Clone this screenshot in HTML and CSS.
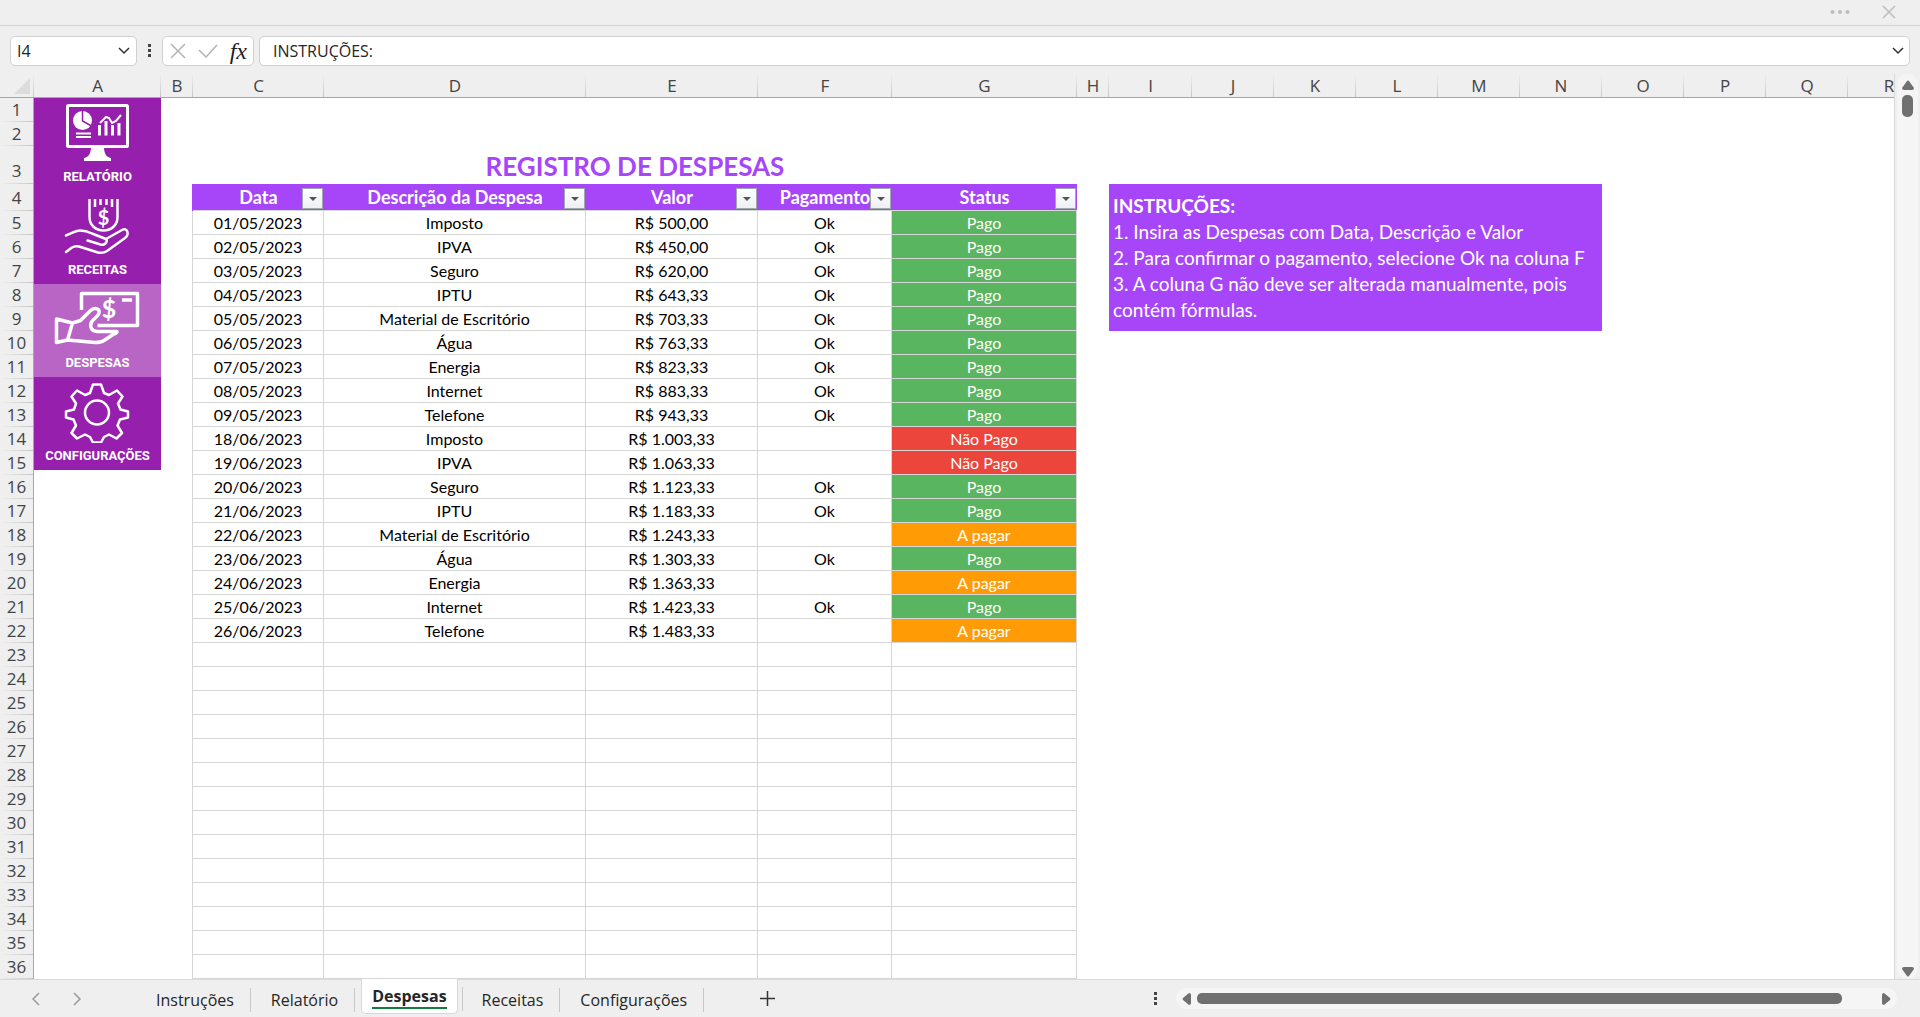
FILE: index.html
```html
<!DOCTYPE html>
<html lang="pt-BR">
<head>
<meta charset="utf-8">
<title>Registro de Despesas</title>
<link rel="stylesheet" href="styles.css">
</head>
<body>
<header class="topbar">
  <button class="icon-btn" aria-label="Mais opções"><svg width="20" height="6" viewBox="0 0 20 6" fill="#bdbdbd"><circle cx="2.500" cy="3" r="2"/><circle cx="10" cy="3" r="2"/><circle cx="17.500" cy="3" r="2"/></svg></button>
  <button class="icon-btn" aria-label="Fechar"><svg width="14" height="14" viewBox="0 0 14 14" stroke="#bdbdbd" stroke-width="1.500"><path d="M1 1l12 12M13 1L1 13"/></svg></button>
</header>

<div class="formula-row">
  <div class="name-box">
    <input class="name-input" type="text" value="I4" aria-label="Caixa de nome">
    <button class="icon-btn" aria-label="Abrir lista de nomes"><svg width="12" height="8" viewBox="0 0 12 8" fill="none" stroke="#333" stroke-width="1.500"><path d="M1 1l5 5 5-5"/></svg></button>
  </div>
  <svg class="grip" width="4" height="14" viewBox="0 0 4 14" fill="#444"><path d="M0 0h3v3H0zM0 5h3v3H0zM0 10h3v3H0z"/></svg>
  <div class="fx-box">
    <button class="icon-btn" aria-label="Cancelar"><svg width="16" height="16" viewBox="0 0 16 16" stroke="#b3b3b3" stroke-width="1.500"><path d="M1 1l14 14M15 1L1 15"/></svg></button>
    <button class="icon-btn" aria-label="Inserir"><svg width="20" height="14" viewBox="0 0 20 14" fill="none" stroke="#b3b3b3" stroke-width="1.500"><path d="M1 6l7 7L19 1"/></svg></button>
    <button class="icon-btn fx" aria-label="Inserir função">fx</button>
  </div>
  <div class="formula-box">
    <input class="formula-input" type="text" value="INSTRUÇÕES:" aria-label="Barra de fórmulas">
    <button class="icon-btn" aria-label="Expandir barra de fórmulas"><svg width="12" height="8" viewBox="0 0 12 8" fill="none" stroke="#333" stroke-width="1.500"><path d="M1 1l5 5 5-5"/></svg></button>
  </div>
</div>

<main class="workspace">
<div class="sheet">
<table class="grid">
<colgroup><col class="c-head"><col class="c-a"><col class="c-b"><col class="c-c"><col class="c-d"><col class="c-e"><col class="c-f"><col class="c-g"><col class="c-h"><col class="c-i"><col class="c-std" span="9"></colgroup>
<thead>
<tr class="letters"><th class="corner"><svg width="16" height="16" viewBox="0 0 16 16" fill="#dcdcdc"><path d="M16 0v16H0z"/></svg></th><th>A</th><th>B</th><th>C</th><th>D</th><th>E</th><th>F</th><th>G</th><th>H</th><th>I</th><th>J</th><th>K</th><th>L</th><th>M</th><th>N</th><th>O</th><th>P</th><th>Q</th><th>R</th></tr>
</thead>
<tbody>
<tr><th scope="row">1</th>
<td class="nav-cell" rowspan="36">
<nav class="side-nav">
<a class="nav-item" href="#relatorio"><svg width="127" height="66" viewBox="0 0 127 66" fill="none" stroke="#fff" stroke-width="3"><rect x="33.500" y="7.500" width="60" height="41" rx="1"/><path fill="#fff" stroke="none" d="M57 49h13c0 6 2 10 7 11v3H50v-3c5-1 7-5 7-11z"/><circle cx="48.500" cy="22.500" r="9.500" fill="#fff" stroke="none"/><path stroke="#961fad" stroke-width="1.500" d="M48.500 12v11l9 5"/><path stroke-width="2" d="M42 35.500h15M42 39h15"/><path d="M65.500 37.500V27M72 37.500V23M78.500 37.500V27M85 37.500V25"/><path stroke-width="2" d="M66 25l6-6 3 1 3 5 4-2 5-6"/></svg><span>RELATÓRIO</span></a>
<a class="nav-item" href="#receitas"><svg width="127" height="66" viewBox="0 0 127 66" fill="none" stroke="#fff" stroke-width="2.500" stroke-linecap="round" stroke-linejoin="round"><path stroke-linecap="butt" d="M55.500 8v18c0 8 6 13.500 14 13.500S83.500 34 83.500 26V8M61 8v8M66.500 8v6M72.500 8v6M78 8v8"/><path d="M32 44.500c5-2 10-5 14-5s8 1 12 3l14 5.500 16-9c5-3 8 4 3 8L73 60c-3 2-6 2-9 1.500l-19-6c-3-.8-5-.3-7 1L32 61M53.500 49.500l13 4c4 1 7-2 6-5"/><text class="coin" x="69.500" y="34">$</text></svg><span>RECEITAS</span></a>
<a class="nav-item active" href="#despesas" aria-current="page"><svg width="127" height="66" viewBox="0 0 127 66" fill="none" stroke="#fff" stroke-width="3.500" stroke-linejoin="round"><path d="M47.500 26V9.500h56V41.500H63.500M88 16h10"/><path d="M22.500 35l16 4-5 17-11 2.500zM38.500 39l8-2.500L56 27c4-4 10-3 9 2-1 4-5 5-7.500 9-2 5 0 9.500 6 9.500h19.500c0 2-2 2-4 3l-9 6c-3 2-6 2-9 2L33.500 56"/><text class="coin big" x="75" y="34">$</text></svg><span>DESPESAS</span></a>
<a class="nav-item" href="#configuracoes"><svg width="127" height="66" viewBox="0 0 127 66" fill="none" stroke="#fff" stroke-width="2.500" stroke-linejoin="round"><path d="M59 7.500h8l3 8.500 5 2 8-4.500 5.500 6-4.500 7 2.500 6 7.500 2v6l-8 2-2.500 6 4.500 7.500-5.500 5.500-7.500-4-5 2.500-3 5.500h-8l-3-5.500-5-2.500-8 4-5.500-5.500 4.500-7.500-2.500-6-7.500-2v-6l8-2 2-6-4.500-7 5.500-6 8 4.500 5-2z"/><circle cx="63" cy="35.500" r="12"/></svg><span>CONFIGURAÇÕES</span></a>
</nav>
</td><td></td><td colspan="5"></td><td colspan="11"></td></tr>
<tr><th scope="row">2</th><td></td><td colspan="5"></td><td colspan="11"></td></tr>
<tr class="title-row"><th scope="row">3</th><td></td><td class="title" colspan="5">REGISTRO DE DESPESAS</td><td colspan="11"></td></tr>
<tr class="head-row"><th scope="row">4</th><td class="edge"></td>
<th class="field" scope="col">Data<button class="filter" aria-label="Filtrar Data"></button></th><th class="field" scope="col">Descrição da Despesa<button class="filter" aria-label="Filtrar Descrição da Despesa"></button></th><th class="field" scope="col">Valor<button class="filter" aria-label="Filtrar Valor"></button></th><th class="field" scope="col">Pagamento<button class="filter" aria-label="Filtrar Pagamento"></button></th><th class="field" scope="col">Status<button class="filter" aria-label="Filtrar Status"></button></th>
<td></td>
<td class="notes" colspan="6" rowspan="6"><strong>INSTRUÇÕES:</strong><br>1. Insira as Despesas com Data, Descrição e Valor<br>2. Para confirmar o pagamento, selecione Ok na coluna F<br>3. A coluna G não deve ser alterada manualmente, pois contém fórmulas.</td><td colspan="4"></td></tr>
<tr class="rec"><th scope="row">5</th><td></td><td>01/05/2023</td><td>Imposto</td><td>R$ 500,00</td><td>Ok</td><td class="paid">Pago</td><td></td><td colspan="4"></td></tr>
<tr class="rec"><th scope="row">6</th><td></td><td>02/05/2023</td><td>IPVA</td><td>R$ 450,00</td><td>Ok</td><td class="paid">Pago</td><td></td><td colspan="4"></td></tr>
<tr class="rec"><th scope="row">7</th><td></td><td>03/05/2023</td><td>Seguro</td><td>R$ 620,00</td><td>Ok</td><td class="paid">Pago</td><td></td><td colspan="4"></td></tr>
<tr class="rec"><th scope="row">8</th><td></td><td>04/05/2023</td><td>IPTU</td><td>R$ 643,33</td><td>Ok</td><td class="paid">Pago</td><td></td><td colspan="4"></td></tr>
<tr class="rec"><th scope="row">9</th><td></td><td>05/05/2023</td><td>Material de Escritório</td><td>R$ 703,33</td><td>Ok</td><td class="paid">Pago</td><td></td><td colspan="4"></td></tr>
<tr class="rec"><th scope="row">10</th><td></td><td>06/05/2023</td><td>Água</td><td>R$ 763,33</td><td>Ok</td><td class="paid">Pago</td><td colspan="11"></td></tr>
<tr class="rec"><th scope="row">11</th><td></td><td>07/05/2023</td><td>Energia</td><td>R$ 823,33</td><td>Ok</td><td class="paid">Pago</td><td colspan="11"></td></tr>
<tr class="rec"><th scope="row">12</th><td></td><td>08/05/2023</td><td>Internet</td><td>R$ 883,33</td><td>Ok</td><td class="paid">Pago</td><td colspan="11"></td></tr>
<tr class="rec"><th scope="row">13</th><td></td><td>09/05/2023</td><td>Telefone</td><td>R$ 943,33</td><td>Ok</td><td class="paid">Pago</td><td colspan="11"></td></tr>
<tr class="rec"><th scope="row">14</th><td></td><td>18/06/2023</td><td>Imposto</td><td>R$ 1.003,33</td><td></td><td class="unpaid">Não Pago</td><td colspan="11"></td></tr>
<tr class="rec"><th scope="row">15</th><td></td><td>19/06/2023</td><td>IPVA</td><td>R$ 1.063,33</td><td></td><td class="unpaid">Não Pago</td><td colspan="11"></td></tr>
<tr class="rec"><th scope="row">16</th><td></td><td>20/06/2023</td><td>Seguro</td><td>R$ 1.123,33</td><td>Ok</td><td class="paid">Pago</td><td colspan="11"></td></tr>
<tr class="rec"><th scope="row">17</th><td></td><td>21/06/2023</td><td>IPTU</td><td>R$ 1.183,33</td><td>Ok</td><td class="paid">Pago</td><td colspan="11"></td></tr>
<tr class="rec"><th scope="row">18</th><td></td><td>22/06/2023</td><td>Material de Escritório</td><td>R$ 1.243,33</td><td></td><td class="due">A pagar</td><td colspan="11"></td></tr>
<tr class="rec"><th scope="row">19</th><td></td><td>23/06/2023</td><td>Água</td><td>R$ 1.303,33</td><td>Ok</td><td class="paid">Pago</td><td colspan="11"></td></tr>
<tr class="rec"><th scope="row">20</th><td></td><td>24/06/2023</td><td>Energia</td><td>R$ 1.363,33</td><td></td><td class="due">A pagar</td><td colspan="11"></td></tr>
<tr class="rec"><th scope="row">21</th><td></td><td>25/06/2023</td><td>Internet</td><td>R$ 1.423,33</td><td>Ok</td><td class="paid">Pago</td><td colspan="11"></td></tr>
<tr class="rec"><th scope="row">22</th><td></td><td>26/06/2023</td><td>Telefone</td><td>R$ 1.483,33</td><td></td><td class="due">A pagar</td><td colspan="11"></td></tr>
<tr class="rec"><th scope="row">23</th><td></td><td></td><td></td><td></td><td></td><td></td><td colspan="11"></td></tr>
<tr class="rec"><th scope="row">24</th><td></td><td></td><td></td><td></td><td></td><td></td><td colspan="11"></td></tr>
<tr class="rec"><th scope="row">25</th><td></td><td></td><td></td><td></td><td></td><td></td><td colspan="11"></td></tr>
<tr class="rec"><th scope="row">26</th><td></td><td></td><td></td><td></td><td></td><td></td><td colspan="11"></td></tr>
<tr class="rec"><th scope="row">27</th><td></td><td></td><td></td><td></td><td></td><td></td><td colspan="11"></td></tr>
<tr class="rec"><th scope="row">28</th><td></td><td></td><td></td><td></td><td></td><td></td><td colspan="11"></td></tr>
<tr class="rec"><th scope="row">29</th><td></td><td></td><td></td><td></td><td></td><td></td><td colspan="11"></td></tr>
<tr class="rec"><th scope="row">30</th><td></td><td></td><td></td><td></td><td></td><td></td><td colspan="11"></td></tr>
<tr class="rec"><th scope="row">31</th><td></td><td></td><td></td><td></td><td></td><td></td><td colspan="11"></td></tr>
<tr class="rec"><th scope="row">32</th><td></td><td></td><td></td><td></td><td></td><td></td><td colspan="11"></td></tr>
<tr class="rec"><th scope="row">33</th><td></td><td></td><td></td><td></td><td></td><td></td><td colspan="11"></td></tr>
<tr class="rec"><th scope="row">34</th><td></td><td></td><td></td><td></td><td></td><td></td><td colspan="11"></td></tr>
<tr class="rec"><th scope="row">35</th><td></td><td></td><td></td><td></td><td></td><td></td><td colspan="11"></td></tr>
<tr class="rec"><th scope="row">36</th><td></td><td></td><td></td><td></td><td></td><td></td><td colspan="11"></td></tr>
</tbody>
</table>
</div>
<div class="vscroll">
  <button class="icon-btn" aria-label="Rolar para cima"><svg width="12" height="10" viewBox="0 0 12 10" fill="#707070"><path d="M5 1q1-1 2 0l5 7q0 2-2 2H2Q0 10 0 8z"/></svg></button>
  <div class="vthumb"></div>
  <button class="icon-btn" aria-label="Rolar para baixo"><svg width="12" height="10" viewBox="0 0 12 10" fill="#707070"><path d="M5 9q1 1 2 0l5-7q0-2-2-2H2Q0 0 0 2z"/></svg></button>
</div>
</main>

<footer class="bottombar">
  <div class="sheet-nav">
    <button class="icon-btn" aria-label="Planilha anterior"><svg width="8" height="14" viewBox="0 0 8 14" fill="none" stroke="#999" stroke-width="1.500"><path d="M7 1L1 7l6 6"/></svg></button>
    <button class="icon-btn" aria-label="Próxima planilha"><svg width="8" height="14" viewBox="0 0 8 14" fill="none" stroke="#999" stroke-width="1.500"><path d="M1 1l6 6-6 6"/></svg></button>
  </div>
  <div class="tabs">
    <button class="tab">Instruções</button>
    <button class="tab">Relatório</button>
    <button class="tab current"><span>Despesas</span></button>
    <button class="tab">Receitas</button>
    <button class="tab">Configurações</button>
  </div>
  <button class="icon-btn add" aria-label="Nova planilha"><svg width="15" height="15" viewBox="0 0 15 15" stroke="#333" stroke-width="1.500"><path d="M7.500 0v15M0 7.500h15"/></svg></button>
  <svg class="grip" width="4" height="14" viewBox="0 0 4 14" fill="#444"><path d="M0 0h3v3H0zM0 5h3v3H0zM0 10h3v3H0z"/></svg>
  <div class="hscroll">
    <button class="icon-btn" aria-label="Rolar para a esquerda"><svg width="9" height="12" viewBox="0 0 9 12" fill="#707070"><path d="M1 5q-1 1 0 2l6 5q2 0 2-2V2Q9 0 7 0z"/></svg></button>
    <div class="htrack"><div class="hthumb"></div></div>
    <button class="icon-btn" aria-label="Rolar para a direita"><svg width="9" height="12" viewBox="0 0 9 12" fill="#707070"><path d="M8 5q1 1 0 2l-6 5q-2 0-2-2V2Q0 0 2 0z"/></svg></button>
  </div>
</footer>
</body>
</html>
```

FILE: styles.css
```css
* { box-sizing: border-box; }

body {
  margin: 0;
  height: 100vh;
  display: flex;
  flex-direction: column;
  overflow: hidden;
  background: #efefef;
  color: #262626;
  font-family: "Open Sans", sans-serif;
  font-size: 16px;
}

button, input {
  font: inherit;
  color: inherit;
  border: 0;
  padding: 0;
  background: none;
}

.icon-btn {
  display: flex;
  align-items: center;
  justify-content: center;
}

svg { display: block; flex: none; }

/* Top strip and formula bar */
.topbar {
  flex: none;
  height: 26px;
  display: flex;
  justify-content: flex-end;
  align-items: center;
  gap: 32px;
  padding: 0 24px 2px;
  border-bottom: 1px solid #d0d0d0;
}

.formula-row {
  flex: none;
  display: flex;
  align-items: center;
  padding: 10px 10px 8px;
}

.name-box, .fx-box, .formula-box {
  display: flex;
  align-items: center;
  height: 30px;
  background: #fff;
  border: 1px solid #d0d0d0;
  border-radius: 5px;
}

.name-box { width: 127px; padding: 0 6px; }
.name-input { flex: 1; min-width: 0; }
.formula-row .grip { margin: 0 10px 0 11px; }
.fx-box { width: 92px; padding: 0 6px 0 7px; justify-content: space-between; }
.fx { font: italic 24px/24px "Liberation Serif", serif; color: #222; }
.formula-box { flex: 1; margin-left: 5px; padding: 0 5px 0 13px; }
.formula-input { flex: 1; min-width: 0; }

/* Worksheet */
.workspace {
  flex: 1;
  min-height: 0;
  display: flex;
}

.sheet {
  flex: 1;
  min-width: 0;
  overflow: hidden;
  border-right: 1px solid #d9d9d9;
  background: #fff;
}

.grid {
  table-layout: fixed;
  width: 1930px;
  border-collapse: separate;
  border-spacing: 0;
  font-family: Lato, sans-serif;
  color: #000;
}

.c-head { width: 34px; }
.c-a { width: 127px; }
.c-b { width: 32px; }
.c-c { width: 131px; }
.c-d { width: 262px; }
.c-e { width: 172px; }
.c-f { width: 134px; }
.c-g { width: 185px; }
.c-h { width: 32px; }
.c-i { width: 83px; }
.c-std { width: 82px; }

.grid tr { height: 24px; }
.grid .title-row { height: 38px; }
.grid .head-row { height: 27px; }

.grid th, .grid td {
  padding: 0;
  line-height: 22px;
  text-align: center;
  white-space: nowrap;
}

.letters th {
  height: 24px;
  font: 17px/22px "Open Sans", sans-serif;
  color: #444;
  border-bottom: 1px solid #a6a6a6;
  background: linear-gradient(#efefef, #c6c6c6) right / 1px 100% no-repeat #efefef;
}

.letters .corner svg { margin-left: 14px; }

.grid th[scope="row"] {
  font: 17px/22px "Open Sans", sans-serif;
  color: #444;
  border-right: 1px solid #a6a6a6;
  background: linear-gradient(to right, #efefef, #c6c6c6) bottom / 100% 1px no-repeat #efefef;
}

.grid .title-row th[scope="row"] { vertical-align: bottom; padding-bottom: 2px; }

.grid .title {
  font-size: 26px;
  line-height: 34px;
  font-weight: 700;
  color: #a746f9;
  vertical-align: bottom;
  padding-bottom: 1px;
}

.head-row .edge { border-right: 1px solid #a746f9; }

.head-row .field {
  position: relative;
  font-size: 18px;
  font-weight: 700;
  color: #fff;
  background: #a746f9;
  border-bottom: 1px solid #d6d6d6;
}

.filter {
  position: absolute;
  right: 1px;
  bottom: 1px;
  width: 21px;
  height: 21px;
  display: flex;
  align-items: center;
  justify-content: center;
  border: 1px solid #a0a8b0;
  background: linear-gradient(#fff, #eef0f4);
}

.filter::after {
  content: "";
  border: 4px solid transparent;
  border-top-color: #555;
  border-bottom: 0;
}

.rec td:nth-of-type(-n+6) { border-right: 1px solid #d6d6d6; }
.rec td:nth-of-type(n+2):nth-of-type(-n+6) { border-bottom: 1px solid #d6d6d6; }

.paid, .unpaid, .due { color: #fff; }
.paid { background: #5ab561; }
.unpaid { background: #eb453c; }
.due { background: #ff9b04; }

.grid .notes {
  padding: 0 4px;
  font-size: 19px;
  line-height: 26px;
  text-align: left;
  white-space: normal;
  color: #fff;
  background: #a746f9;
}

/* Navigation buttons in column A */
.grid .nav-cell { vertical-align: top; }

.side-nav { display: flex; flex-direction: column; background: #961fad; }

.nav-item {
  height: 93px;
  color: #fff;
  text-decoration: none;
  font: bold 13px/26px Roboto, sans-serif;
}

.nav-item.active { background: #b965c6; }

.coin {
  font: bold 20px Lato, sans-serif;
  fill: #fff;
  stroke: none;
  text-anchor: middle;
}

.coin.big { font-size: 25px; }

/* Scroll bars */
.vscroll {
  flex: none;
  width: 21px;
  margin: 0 2px;
  padding: 6px 0 2px;
  display: flex;
  flex-direction: column;
  align-items: center;
  gap: 5px;
  border-radius: 10px;
  background: #f5f5f5;
}

.vthumb { width: 11px; height: 22px; border-radius: 5px; background: #707070; }
.vscroll .icon-btn:last-child { margin-top: auto; }

.bottombar {
  flex: none;
  height: 38px;
  display: flex;
  align-items: center;
  padding-right: 23px;
  border-top: 1px solid #d9d9d9;
}

.sheet-nav { display: flex; gap: 33px; width: 136px; padding-left: 32px; }

.tabs { display: flex; align-self: stretch; }

.tab {
  position: relative;
  padding: 0 17px 0 20px;
  line-height: 40px;
}

.tab::after {
  content: "";
  position: absolute;
  right: 0;
  top: 8px;
  height: 24px;
  border-right: 1px solid #c8c8c8;
}

.tab.current::after { right: -6px; }

.tab.current {
  display: flex;
  align-items: flex-start;
  height: 35px;
  margin: -1px 4px 0 6px;
  padding: 6px 10px 0;
  font-weight: 700;
  line-height: 22px;
  background: #fff;
  border: 1px solid #d9d9d9;
  border-top: 0;
  border-radius: 0 0 5px 5px;
}

.tab.current span { border-bottom: 2px solid #107c41; }

.add { margin-left: 56px; }

.bottombar .grip { margin-left: auto; }

.hscroll {
  flex: 0 1 721px;
  height: 21px;
  margin-left: 18px;
  padding: 0 6px;
  display: flex;
  align-items: center;
  gap: 6px;
  border-radius: 10px;
  background: #f5f5f5;
}

.htrack { flex: 1; }
.hthumb { width: 95%; height: 11px; border-radius: 5px; background: #707070; }
```
